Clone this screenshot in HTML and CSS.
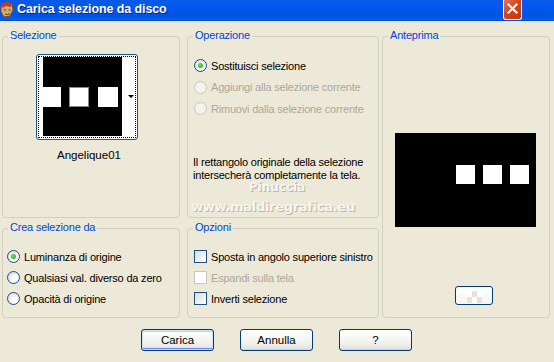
FILE: index.html
```html
<!DOCTYPE html>
<html lang="it">
<head>
  <meta charset="UTF-8">
  <title>Carica selezione da disco</title>
  <link rel="stylesheet" href="styles.css">
</head>
<body>
  <div class="window">
    <div class="titlebar">
      <svg class="app-icon" width="14" height="16" viewBox="0 0 14 16">
        <path d="M1 3 L6 0 L12 2 L13 8 L10 14 L4 15 L1 10 Z" fill="#e9a46a" stroke="#8a4a20" stroke-width="1"/>
        <path d="M1 3 L6 0 L12 2 L11 5 L6 4 L2 6 Z" fill="#c0392b"/>
        <circle cx="5" cy="8" r="1.3" fill="#2a6"/>
        <circle cx="9.5" cy="8" r="1.3" fill="#2a6"/>
        <path d="M5 12 Q7.5 13.5 10 11.5" stroke="#7a2a10" fill="none"/>
      </svg>
      <span class="title">Carica selezione da disco</span>
      <button class="close-button">
        <svg width="11" height="11" viewBox="0 0 11 11"><path d="M1.5 1.5 L9.5 9.5 M9.5 1.5 L1.5 9.5" stroke="#fff" stroke-width="2.2" stroke-linecap="square"/></svg>
      </button>
    </div>

    <div class="content">
      <div class="groups">
        <div class="group selezione">
          <span class="group-title">Selezione</span>
          <div class="thumb">
            <div class="thumb-image">
              <div class="thumb-band">
                <span class="thumb-white side"></span>
                <span class="thumb-white mid"></span>
                <span class="thumb-white right"></span>
              </div>
            </div>
            <span class="thumb-arrow"></span>
          </div>
          <div class="thumb-name">Angelique01</div>
        </div>

        <div class="group operazione">
          <span class="group-title">Operazione</span>
          <div class="option"><span class="radio checked"></span>Sostituisci selezione</div>
          <div class="option disabled"><span class="radio"></span>Aggiungi alla selezione corrente</div>
          <div class="option disabled"><span class="radio"></span>Rimuovi dalla selezione corrente</div>
          <p class="note">Il rettangolo originale della selezione<br>intersecherà completamente la tela.</p>
          <div class="watermark">
            <span class="wm-name">Pinuccia</span>
            <span class="wm-site">www.maldiregrafica.eu</span>
          </div>
        </div>

        <div class="group anteprima">
          <span class="group-title">Anteprima</span>
          <div class="preview">
            <span class="preview-square"></span>
            <span class="preview-square"></span>
            <span class="preview-square"></span>
          </div>
          <button class="small-button"><span class="checker"></span></button>
        </div>

        <div class="group crea">
          <span class="group-title">Crea selezione da</span>
          <div class="option"><span class="radio checked"></span>Luminanza di origine</div>
          <div class="option"><span class="radio"></span>Qualsiasi val. diverso da zero</div>
          <div class="option"><span class="radio"></span>Opacità di origine</div>
        </div>

        <div class="group opzioni">
          <span class="group-title">Opzioni</span>
          <div class="option"><span class="checkbox"></span>Sposta in angolo superiore sinistro</div>
          <div class="option disabled"><span class="checkbox"></span>Espandi sulla tela</div>
          <div class="option"><span class="checkbox"></span>Inverti selezione</div>
        </div>
      </div>

      <div class="buttons">
        <button class="button default">Carica</button>
        <button class="button">Annulla</button>
        <button class="button">?</button>
      </div>
    </div>
  </div>
</body>
</html>
```

FILE: styles.css
```css
body {
  margin: 0;
  padding: 0;
  background-color: #ece9d8;
  font-family: 'Liberation Sans', Arial, sans-serif;
  font-size: 11px;
  letter-spacing: -0.2px;
  color: #000;
  overflow: hidden;
}

.window {
  width: 554px;
  height: 362px;
  display: flex;
  flex-direction: column;
}

.titlebar {
  height: 21px;
  display: flex;
  align-items: center;
  background: linear-gradient(#0a5ae8, #0058ee 40%, #0054e3 75%, #0a5fe9 92%, #0046c8);
  color: #fff;
  flex-shrink: 0;
}

.app-icon {
  margin-top: -2px;
}

.title {
  margin-left: 3px;
  font-family: 'Liberation Sans', Arial, sans-serif;
  font-weight: bold;
  font-size: 12.5px;
  letter-spacing: -0.1px;
  text-shadow: 1px 1px 0 #0a1e8c;
  margin-top: -3px;
}

.close-button {
  margin-left: auto;
  margin-right: 32px;
  margin-top: -3px;
  width: 19px;
  height: 21px;
  padding: 0;
  border: 1px solid #fff;
  border-top: none;
  border-radius: 0 0 3px 3px;
  background: linear-gradient(135deg, #e87a5a, #d9431d 45%, #c2350f);
  display: flex;
  align-items: center;
  justify-content: center;
}

.content {
  padding: 15px 0 0 2px;
}

.groups {
  display: grid;
  grid-template-columns: 178px 7px 192px 3px 168px;
  grid-template-rows: 182px 90px;
  row-gap: 10px;
}

.group {
  position: relative;
  border: 1px solid #d0d0bf;
  border-radius: 4px;
  box-sizing: border-box;
}

.group-title {
  position: absolute;
  top: -8px;
  left: 5px;
  padding: 0 2px;
  background-color: #ece9d8;
  color: #0046d5;
}

.selezione { grid-column: 1; grid-row: 1; }
.operazione { grid-column: 3; grid-row: 1; padding: 18px 0 0 6px; }
.operazione .option { height: 21.5px; }
.anteprima { grid-column: 5; grid-row: 1 / 3; }
.crea { grid-column: 1; grid-row: 2; padding: 17px 0 0 4px; }
.opzioni { grid-column: 3; grid-row: 2; padding: 17px 0 0 6px; }

/* selection thumbnail */
.thumb {
  position: relative;
  margin: 17px 0 0 33px;
  width: 102px;
  height: 86px;
  border: 1px solid #1c5180;
  border-radius: 3px;
  box-sizing: border-box;
  background-color: #fff;
  padding: 2px;
  outline: 1px dotted #000;
  outline-offset: -3px;
}

.thumb-image {
  width: 79px;
  height: 79px;
  margin-left: 4px;
  background-color: #000;
  display: flex;
  align-items: center;
}

.thumb-band {
  display: flex;
  align-items: center;
  height: 20px;
  width: 100%;
  margin-top: 1px;
}

.thumb-white {
  height: 20px;
  background-color: #fff;
  box-shadow: inset 0 0 0 1px #888;
}

.thumb-white.side { width: 22px; margin-left: -4px; box-shadow: none; }
.thumb-white.mid { width: 20px; margin-left: 8px; }
.thumb-white.right { width: 20px; margin-left: 9px; box-shadow: none; }

.thumb-arrow {
  position: absolute;
  right: 3px;
  top: 40px;
  width: 0;
  height: 0;
  border-left: 3px solid transparent;
  border-right: 3px solid transparent;
  border-top: 3px solid #000;
}

.thumb-name {
  margin: 9px 0 0 54px;
  font-size: 11.5px;
  letter-spacing: 0;
}

/* options */
.option {
  display: flex;
  align-items: center;
  height: 21px;
  white-space: nowrap;
}

.option.disabled {
  color: #aca899;
}

.radio {
  width: 11px;
  height: 11px;
  border: 1px solid #1c5180;
  border-radius: 50%;
  background: radial-gradient(circle at 65% 65%, #fff 20%, #e2e2dd 70%, #cfcfc8);
  margin-right: 4px;
  position: relative;
  flex-shrink: 0;
}

.radio.checked::after {
  content: '';
  position: absolute;
  left: 3px;
  top: 3px;
  width: 5px;
  height: 5px;
  border-radius: 50%;
  background: radial-gradient(circle at 40% 40%, #5fe35f, #21a121);
}

.disabled .radio {
  border-color: #cac8bb;
  background: #f4f3ee;
}

.checkbox {
  width: 11px;
  height: 11px;
  border: 1px solid #1c5180;
  background: linear-gradient(135deg, #dcdcd7, #fff);
  margin-right: 4px;
  flex-shrink: 0;
}

.disabled .checkbox {
  border-color: #cac8bb;
  background: #fff;
}

.note {
  margin: 36px 0 0 -1px;
  line-height: 13px;
}

.watermark {
  position: absolute;
  left: -10px;
  top: 143px;
  width: 190px;
  display: flex;
  flex-direction: column;
  align-items: center;
  font-family: 'DejaVu Sans', sans-serif;
  font-weight: bold;
  letter-spacing: 0;
  color: #f6f5ef;
  text-shadow: 1px 1px 0 #b9b6a8;
  pointer-events: none;
}

.wm-name { font-size: 12px; margin-left: 8px; }
.wm-site { font-size: 13px; letter-spacing: -0.3px; margin-top: 5px; }

/* preview */
.preview {
  margin: 96px 0 0 12px;
  width: 141px;
  height: 94px;
  background-color: #000;
  display: flex;
  align-items: flex-start;
  padding: 32px 0 0 61px;
  box-sizing: border-box;
  gap: 8px;
}

.preview-square {
  width: 19px;
  height: 19px;
  background-color: #fff;
}

.small-button {
  display: block;
  margin: 59px 0 0 72px;
  width: 38px;
  height: 19px;
  border: 1px solid #003c74;
  border-radius: 3px;
  background: linear-gradient(#fff, #f4f4f0);
  padding: 0;
}

.checker {
  display: block;
  margin: 2px auto 0;
  width: 15px;
  height: 12px;
  background:
    linear-gradient(#fff, #fff) 0 0 / 5px 6px no-repeat,
    linear-gradient(#fff, #fff) 10px 0 / 5px 6px no-repeat,
    linear-gradient(#fff, #fff) 5px 6px / 5px 6px no-repeat,
    #e4e3dd;
}

/* dialog buttons */
.buttons {
  display: flex;
  gap: 26px;
  margin: 11px 0 0 139px;
}

.button {
  width: 73px;
  height: 22px;
  border: 1px solid #003c74;
  border-radius: 3px;
  background: linear-gradient(#fff, #f3f3ef 60%, #e6e5df 90%, #d6d0c5);
  font-family: 'Liberation Sans', Arial, sans-serif;
  font-size: 11.5px;
  color: #000;
  padding: 0;
}

.button.default {
  box-shadow: inset 0 0 0 1px #cee7ff, inset 0 -1px 0 1px #6982ee, inset 0 1px 0 1px #bcd4f6;
}
```
